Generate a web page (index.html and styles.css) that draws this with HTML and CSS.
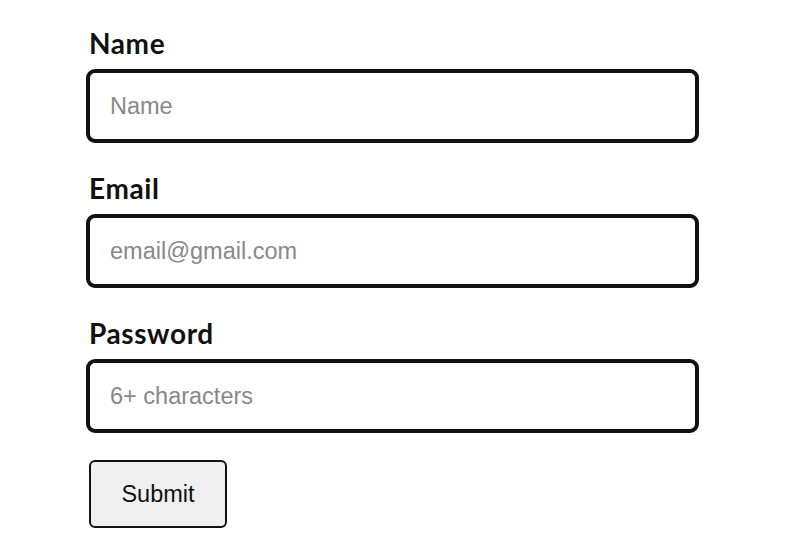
FILE: index.html
```html
<!DOCTYPE html>
<html lang="en">
<head>
  <meta charset="UTF-8">
  <title>Sign up</title>
  <link rel="stylesheet" href="styles.css">
</head>
<body>

<form class="signup-form">
  <label for="name">Name</label>
  <input type="text" id="name" placeholder="Name">

  <label for="email">Email</label>
  <input type="email" id="email" placeholder="email@gmail.com">

  <label for="password">Password</label>
  <input type="password" id="password" placeholder="6+ characters">

  <button type="submit" class="submit-button">Submit</button>
</form>

</body>
</html>
```

FILE: styles.css
```css
body {
  margin: 0;
  background-color: #fff;
}

.signup-form {
  display: flex;
  flex-direction: column;
  align-items: flex-start;
  padding: 28px 0 0 86px;
}

.signup-form label {
  font-family: Lato, "Noto Sans", sans-serif;
  font-weight: bold;
  font-size: 28px;
  letter-spacing: 0.6px;
  line-height: 30px;
  color: #111;
  padding-left: 3px;
  margin-bottom: 11px;
}

.signup-form input {
  box-sizing: border-box;
  width: 613px;
  height: 74px;
  border: 4px solid #111;
  border-radius: 9px;
  padding: 0 20px;
  margin-bottom: 30px;
  font-family: "Liberation Sans", Arial, sans-serif;
  font-size: 23.5px;
  color: #222;
}

.signup-form input::placeholder {
  color: #888;
}

.submit-button {
  box-sizing: border-box;
  margin: -3px 0 0 3px;
  width: 138px;
  height: 68px;
  background-color: #efefef;
  border: 2px solid #111;
  border-radius: 6px;
  font-family: "Liberation Sans", Arial, sans-serif;
  font-size: 23.5px;
  color: #111;
}
```
